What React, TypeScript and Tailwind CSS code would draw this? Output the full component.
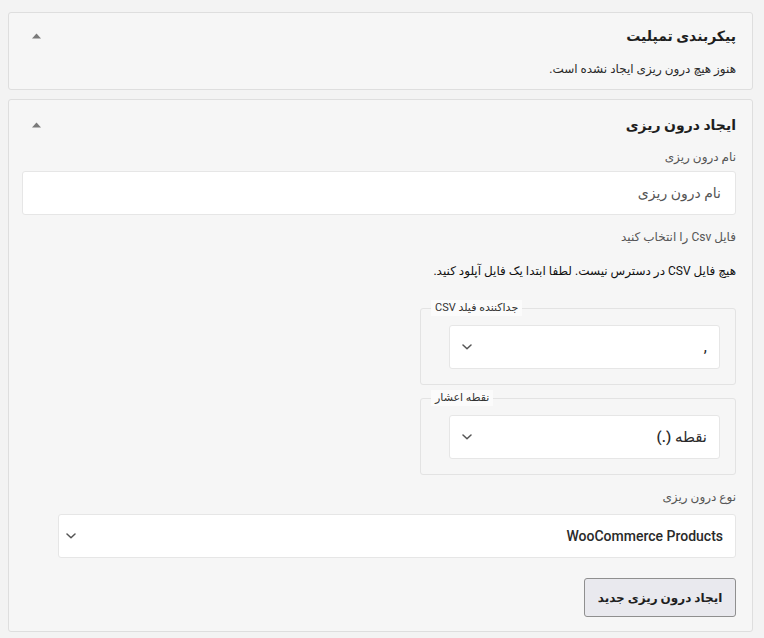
import React from 'react';

const font = { fontFamily: 'Roboto, "DejaVu Sans", sans-serif' };

/** Small filled triangle used as the panel toggle */
function ToggleUp() {
  return (
    <svg width="9" height="6" viewBox="0 0 9 6" className="block">
      <path d="M0 5.5 L4.5 0.5 L9 5.5 Z" fill="#7a7a7a" />
    </svg>
  );
}

function ChevronDown() {
  return (
    <svg width="10" height="6" viewBox="0 0 10 6" className="block">
      <path d="M1 1 L5 4.8 L9 1" fill="none" stroke="#555" strokeWidth="1.5" strokeLinecap="round" strokeLinejoin="round" />
    </svg>
  );
}

function PanelHeader({ title }: { title: string }) {
  return (
    <div className="flex items-center justify-between h-6">
      <h2 className="text-[14px] font-bold text-[#1e1e1e] leading-6">{title}</h2>
      <div className="pl-[10px]">
        <ToggleUp />
      </div>
    </div>
  );
}

function FakeSelect({ value, pr = 'pr-3', pl = 'pl-3', valueClass = '' }: { value: string; pr?: string; pl?: string; valueClass?: string }) {
  return (
    <div dir="rtl" className={`flex items-center justify-between h-11 bg-white border border-[#e6e6e6] rounded-[3px] ${pr} ${pl}`}>
      <span className={`text-[14px] text-[#2a2a2a] font-medium ${valueClass}`}>{value}</span>
      <ChevronDown />
    </div>
  );
}

function FieldBox({ legend, value, mt, pt, valueClass }: { legend: string; value: string; mt: string; pt: string; valueClass?: string }) {
  return (
    <fieldset dir="ltr" className={`w-[316px] border border-[#e3e3e3] rounded-[3px] pl-[28px] pr-[15px] pb-[15px] ${mt} ${pt}`}>
      <legend dir="rtl" className="ml-[-18px] px-1 bg-[#fbfbfb] text-[11px] leading-4 text-[#333]">{legend}</legend>
      <FakeSelect value={value} valueClass={valueClass} />
    </fieldset>
  );
}

export default function App() {
  return (
    <div dir="rtl" style={font} className="min-h-screen bg-[#f3f3f3] pt-3 pl-2 pr-[11px] text-[#222]">
      {/* Template config panel */}
      <section className="bg-[#f6f6f6] border border-[#dedede] rounded-[3px] pt-[11px] pb-[10px] pr-4 pl-[13px]">
        <PanelHeader title="پیکربندی تمپلیت" />
        <p className="mt-[11px] text-[12px] leading-5 text-[#2a2a2a]">هنوز هیچ درون ریزی ایجاد نشده است.</p>
      </section>

      {/* Create import panel */}
      <section className="mt-[9px] bg-[#f6f6f6] border border-[#dedede] rounded-[3px] pt-[13px] pb-[14px] pr-4 pl-[13px]">
        <PanelHeader title="ایجاد درون ریزی" />

        <label className="block mt-[10px] text-[12px] leading-5 text-[#555]">نام درون ریزی</label>
        <div className="mt-1 h-11 flex items-center bg-white border border-[#e6e6e6] rounded-[3px] pr-[14px]">
          <span className="text-[14px] text-[#555]">نام درون ریزی</span>
        </div>

        <label className="block mt-3 text-[12px] leading-5 text-[#555]">فایل Csv را انتخاب کنید</label>
        <p className="mt-[14px] text-[12px] leading-5 text-[#111]">هیچ فایل CSV در دسترس نیست. لطفا ابتدا یک فایل آپلود کنید.</p>

        <FieldBox legend="جداکننده فیلد CSV" value="," mt="mt-[19px]" pt="pt-[9px]" />
        <FieldBox legend="نقطه اعشار" value="نقطه (.)" mt="mt-[5px]" pt="pt-[9px]" valueClass="text-[15px]" />

        <label className="block mt-3 text-[12px] leading-5 text-[#555]">نوع درون ریزی</label>
        <div className="mt-[7px] ml-[36px]">
          <FakeSelect value="WooCommerce Products" pl="pl-[7px]" />
        </div>

        <button className="mt-5 w-[152px] h-[39px] bg-[#e9e9ee] border border-[#8f8f8f] rounded-[3px] text-[12px] font-bold text-[#1e1e1e]">
          ایجاد درون ریزی جدید
        </button>
      </section>
    </div>
  );
}
